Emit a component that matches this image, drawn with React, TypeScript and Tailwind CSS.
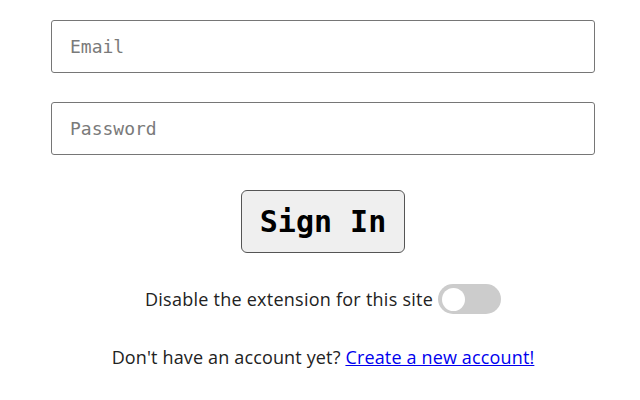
import React from "react";

export default function App() {
  return (
    <div className="w-[640px] h-[400px] bg-white overflow-hidden">
      <div className="flex flex-col items-center pl-[51px] pr-[45px] pt-[20px]">
        <input
          type="email"
          placeholder="Email"
          className="w-full h-[53px] border border-[#767676] rounded-[3px] px-[18px] text-[18px] text-black placeholder:text-[#7a7a7a] outline-none"
          style={{ fontFamily: '"DejaVu Sans Mono", monospace' }}
        />
        <input
          type="password"
          placeholder="Password"
          className="mt-[29px] w-full h-[53px] border border-[#767676] rounded-[3px] px-[18px] text-[18px] text-black placeholder:text-[#7a7a7a] outline-none"
          style={{ fontFamily: '"DejaVu Sans Mono", monospace' }}
        />
        <button
          className="mt-[35px] w-[164px] h-[63px] bg-[#efefef] border border-[#555] rounded-[6px] text-[30px] font-bold text-black"
          style={{ fontFamily: '"DejaVu Sans Mono", monospace' }}
        >
          Sign In
        </button>
        <div
          className="mt-[31px] flex items-center gap-[5px] text-[18px] tracking-[0.25px] text-[#222]"
          style={{ fontFamily: '"Open Sans", sans-serif' }}
        >
          <span>Disable the extension for this site</span>
          <div className="w-[63px] h-[30px] rounded-full bg-[#cccccc] flex items-center px-[4px]">
            <div className="w-[23px] h-[23px] rounded-full bg-white" />
          </div>
        </div>
        <div
          className="mt-[30px] text-[18px] tracking-[0.15px] text-[#222]"
          style={{ fontFamily: '"Open Sans", sans-serif' }}
        >
          Don't have an account yet?{" "}
          <a href="#" className="text-[#0000ee] underline">
            Create a new account!
          </a>
        </div>
      </div>
    </div>
  );
}
